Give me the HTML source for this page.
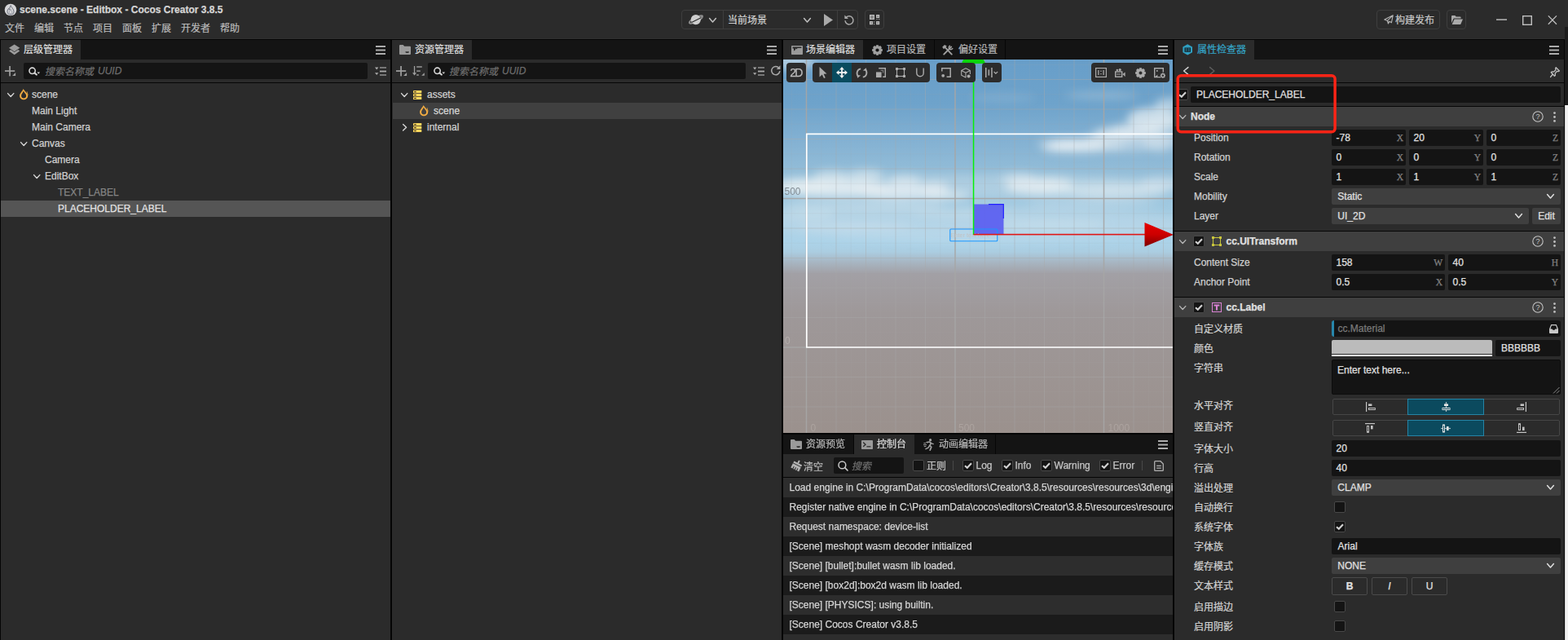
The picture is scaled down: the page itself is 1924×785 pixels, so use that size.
<!DOCTYPE html>
<html><head><meta charset="utf-8"><title>scene.scene - Editbox - Cocos Creator 3.8.5</title>
<style>
html,body{margin:0;padding:0;}
body{width:1924px;height:785px;overflow:hidden;background:#050505;position:relative;font-family:"Liberation Sans",sans-serif;font-size:12px;color:#ccc;}
div{position:absolute;box-sizing:border-box;}
.t{white-space:pre;-webkit-text-stroke:0.25px;}
svg{display:block;overflow:visible;}
.mono{font-family:"Liberation Mono",monospace;}
.cj text{font-family:"Liberation Sans","Noto Sans CJK SC",sans-serif;font-size:12px;stroke-width:0.24px;}
</style></head><body>
<div style="left:0px;top:0px;width:1920px;height:48px;background:#2b2b2b;"></div>
<div style="left:0px;top:47px;width:1920px;height:1px;background:#303030;"></div>
<div style="left:5px;top:4px;line-height:0"><svg width="16" height="16" viewBox="0 0 16 16"><circle cx="8" cy="8" r="7.3" fill="#d6d6d8"/><path fill="none" stroke="#6a6f7c" stroke-width="1" d="M8.2 2.6 C8.8 5.2 12 7 12 10.2 C12 12.6 10.2 14 8 14 C5.8 14 4 12.6 4 10.2 C4 8.4 5 7.2 5.6 6.4 C5.8 7.4 6.2 7.8 6.6 8 C6.6 5.8 7.4 4 8.2 2.6 Z"/><path fill="none" stroke="#8d919c" stroke-width="0.8" d="M8 7.2 C7.6 8.8 6.2 9.8 6.2 11.2 C6.2 12.3 7 13 8 13 C9 13 9.8 12.3 9.8 11.2 C9.8 9.8 8.4 8.8 8 7.2Z"/></svg></div>
<div class="t" style="left:24px;top:2px;height:20px;line-height:20px;font-size:12px;color:#d4d4d4;font-weight:bold;">scene.scene - Editbox - Cocos Creator 3.8.5</div>
<div style="left:6px;top:28px;height:12px;line-height:0"><svg class="cj" width="24.00" height="12.00" viewBox="0 0 24 12" style=""><text x="0" y="10.56" fill="#b8b8b8" stroke="#b8b8b8">文件</text></svg></div>
<div style="left:42px;top:28px;height:12px;line-height:0"><svg class="cj" width="24.00" height="12.00" viewBox="0 0 24 12" style=""><text x="0" y="10.56" fill="#b8b8b8" stroke="#b8b8b8">编辑</text></svg></div>
<div style="left:78px;top:28px;height:12px;line-height:0"><svg class="cj" width="24.00" height="12.00" viewBox="0 0 24 12" style=""><text x="0" y="10.56" fill="#b8b8b8" stroke="#b8b8b8">节点</text></svg></div>
<div style="left:114px;top:28px;height:12px;line-height:0"><svg class="cj" width="24.00" height="12.00" viewBox="0 0 24 12" style=""><text x="0" y="10.56" fill="#b8b8b8" stroke="#b8b8b8">项目</text></svg></div>
<div style="left:150px;top:28px;height:12px;line-height:0"><svg class="cj" width="24.00" height="12.00" viewBox="0 0 24 12" style=""><text x="0" y="10.56" fill="#b8b8b8" stroke="#b8b8b8">面板</text></svg></div>
<div style="left:186px;top:28px;height:12px;line-height:0"><svg class="cj" width="24.00" height="12.00" viewBox="0 0 24 12" style=""><text x="0" y="10.56" fill="#b8b8b8" stroke="#b8b8b8">扩展</text></svg></div>
<div style="left:222px;top:28px;height:12px;line-height:0"><svg class="cj" width="36.00" height="12.00" viewBox="0 0 36 12" style=""><text x="0" y="10.56" fill="#b8b8b8" stroke="#b8b8b8">开发者</text></svg></div>
<div style="left:270px;top:28px;height:12px;line-height:0"><svg class="cj" width="24.00" height="12.00" viewBox="0 0 24 12" style=""><text x="0" y="10.56" fill="#b8b8b8" stroke="#b8b8b8">帮助</text></svg></div>
<div style="left:836px;top:12px;width:217px;height:24px;border:1px solid #3e3e3e;border-radius:4px;"></div>
<div style="left:887px;top:13px;width:1px;height:22px;background:#3e3e3e;"></div>
<div style="left:1027px;top:13px;width:1px;height:22px;background:#3e3e3e;"></div>
<div style="left:845px;top:17px;line-height:0"><svg width="18" height="14" viewBox="0 0 18 14"><ellipse cx="9" cy="7" rx="9" ry="2.6" transform="rotate(-27 9 7)" fill="none" stroke="#8c8c8c" stroke-width="1.6"/><circle cx="8.8" cy="7.1" r="6.1" fill="#cecece"/><path d="M3.6 10.6 L14.6 4.9" stroke="#2b2b2b" stroke-width="1.1"/><path d="M1.2 10.2 C0 11.6 1.6 11.8 4 10.9 M14.4 4.4 C17 2.6 17.6 2.2 16.4 2.2 " fill="none" stroke="#8c8c8c" stroke-width="1.6"/></svg></div>
<div style="left:870px;top:21.5px;line-height:0"><svg width="9" height="5.5" viewBox="0 0 9 5.5"><path d="M0.6 0.6 L4.5 4.9 L8.4 0.6" fill="none" stroke="#c0c0c0" stroke-width="1.5" stroke-linecap="round" stroke-linejoin="round"/></svg></div>
<div style="left:893px;top:18px;height:12px;line-height:0"><svg class="cj" width="48.00" height="12.00" viewBox="0 0 48 12" style=""><text x="0" y="10.56" fill="#d0d0d0" stroke="#d0d0d0">当前场景</text></svg></div>
<div style="left:986px;top:21.5px;line-height:0"><svg width="9" height="5.5" viewBox="0 0 9 5.5"><path d="M0.6 0.6 L4.5 4.9 L8.4 0.6" fill="none" stroke="#c0c0c0" stroke-width="1.5" stroke-linecap="round" stroke-linejoin="round"/></svg></div>
<div style="left:1011px;top:17px;line-height:0"><svg width="11" height="15" viewBox="0 0 11 15"><path fill="#aaaaaa" d="M0 0 L11 7.5 L0 15 Z"/></svg></div>
<div style="left:1036px;top:17.5px;line-height:0"><svg width="12" height="13" viewBox="0 0 12 13"><path d="M2.2 3.6 A5 5 0 1 1 1 7.2" fill="none" stroke="#aaaaaa" stroke-width="1.5"/><path fill="#aaaaaa" d="M0.4 0.4 V5 H5 Z"/></svg></div>
<div style="left:1061px;top:12px;width:24px;height:24px;border:1px solid #3e3e3e;border-radius:4px;"></div>
<div style="left:1067px;top:18px;line-height:0"><svg width="13" height="13" viewBox="0 0 13 13"><rect x="0.6" y="0.6" width="4.8" height="4.8" fill="#858585" stroke="#bdbdbd" stroke-width="1.2"/><rect x="8.7" y="0.6" width="2.9" height="2.9" fill="#858585" stroke="#bdbdbd" stroke-width="1.2"/><rect x="0.6" y="8.7" width="2.9" height="2.9" fill="#858585" stroke="#bdbdbd" stroke-width="1.2"/><rect x="8.7" y="8.7" width="2.9" height="2.9" fill="#858585" stroke="#bdbdbd" stroke-width="1.2"/><rect x="8.5" y="5.1" width="1.1" height="1.1" fill="#bdbdbd"/><rect x="11.2" y="5.1" width="1.1" height="1.1" fill="#bdbdbd"/><rect x="5.1" y="8.4" width="1.1" height="1.1" fill="#bdbdbd"/><rect x="5.1" y="11.1" width="1.1" height="1.1" fill="#bdbdbd"/></svg></div>
<div style="left:1689px;top:12px;width:78px;height:24px;border:1px solid #3e3e3e;border-radius:4px;"></div>
<div style="left:1698px;top:18px;line-height:0"><svg width="12" height="12" viewBox="0 0 12 12"><path d="M11.2 0.8 L0.8 6 L4.4 7.4 L5.4 11 L7 8.2 L9.4 9.8 Z M4.4 7.4 L11.2 0.8 M5.4 11 L5.2 7.8" fill="none" stroke="#b4b4b4" stroke-width="1.1" stroke-linejoin="round"/></svg></div>
<div style="left:1712px;top:18px;height:12px;line-height:0"><svg class="cj" width="48.00" height="12.00" viewBox="0 0 48 12" style=""><text x="0" y="10.56" fill="#c4c4c4" stroke="#c4c4c4">构建发布</text></svg></div>
<div style="left:1775px;top:12px;width:24px;height:24px;border:1px solid #3e3e3e;border-radius:4px;"></div>
<div style="left:1780.5px;top:18.5px;line-height:0"><svg width="14" height="11" viewBox="0 0 14 11"><path fill="#aaaaaa" d="M0 1 Q0 0 1 0 H4.4 L5.8 1.6 H10.6 Q11.6 1.6 11.6 2.6 V3.6 H3.4 Q2.6 3.6 2.2 4.4 L0 9.2 Z"/><path fill="#aaaaaa" d="M3.6 4.6 H14 L11.4 10.4 Q11.2 11 10.4 11 H0.6 Z"/></svg></div>
<div style="left:1834px;top:16px;line-height:0"><svg width="80" height="18" viewBox="0 0 80 18"><rect x="2" y="7.4" width="13" height="1.4" fill="#c0c0c0"/><rect x="34.7" y="3.7" width="10.6" height="10.6" fill="none" stroke="#c0c0c0" stroke-width="1.4"/><path d="M65.8 3.4 L76 13.8 M76 3.4 L65.8 13.8" stroke="#c0c0c0" stroke-width="1.3"/></svg></div>
<div style="left:1920px;top:0px;width:4px;height:33px;background:#2c2c2c;"></div>
<div style="left:1920px;top:33px;width:4px;height:96px;background:#1c1c1c;"></div>
<div style="left:1920px;top:129px;width:4px;height:656px;background:#f2f2f2;"></div>
<div style="left:1920px;top:129px;width:1px;height:656px;background:#cfcfcf;"></div>
<div style="left:1px;top:49px;width:478px;height:736px;background:#2b2b2b;"></div>
<div style="left:1px;top:49px;width:478px;height:24px;background:#141414;"></div>
<div style="left:1px;top:49px;width:98px;height:24px;background:#2b2b2b;"></div>
<div style="left:10.8px;top:54.2px;line-height:0"><svg width="13.3" height="14.2" viewBox="0 0 14 14"><path fill="#9c9c9c" d="M7 0 L14 4.6 L7 9.2 L0 4.6 Z"/><path fill="#9c9c9c" d="M2.3 7 L7 10.1 L11.7 7 L14 8.6 L7 13.4 L0 8.6 Z" /></svg></div>
<div style="left:29px;top:53.8px;height:12px;line-height:0"><svg class="cj" width="60.00" height="12.00" viewBox="0 0 60 12" style=""><text x="0" y="10.56" fill="#dcdcdc" stroke="#dcdcdc">层级管理器</text></svg></div>
<div style="left:461px;top:56px;line-height:0"><svg width="12" height="11" viewBox="0 0 12 11"><rect x="0" y="0" width="12" height="2" fill="#adadad"/><rect x="0" y="4.5" width="12" height="2" fill="#adadad"/><rect x="0" y="9" width="12" height="2" fill="#adadad"/></svg></div>
<div style="left:6px;top:81px;line-height:0"><svg width="14" height="13" viewBox="0 0 14 13"><rect x="0" y="5.2" width="12.2" height="1.7" fill="#a0a0a0"/><rect x="5.2" y="0" width="1.7" height="12.4" fill="#a0a0a0"/><path fill="#a0a0a0" d="M13.1 8 V12 H9.1 Z"/></svg></div>
<div style="left:29px;top:77px;width:422px;height:20px;background:#141414;border-radius:2px;"></div>
<div style="left:34px;top:82px;line-height:0"><svg width="16" height="13" viewBox="0 0 16 13"><circle cx="5.6" cy="4.8" r="3.65" fill="none" stroke="#d6d6d6" stroke-width="1.6"/><path d="M8.4 7.5 L10.8 9.5" stroke="#d6d6d6" stroke-width="2.2" stroke-linecap="round"/><path fill="#d6d6d6" d="M11.5 6.4 H15.1 L13.3 8.8 Z"/></svg></div>
<div style="left:55.3px;top:81px;line-height:0;white-space:nowrap"><svg class="cj" width="60.00" height="12.00" viewBox="0 0 60 12" style=""><text x="0" y="0" transform="translate(0,10.56) skewX(-12)" fill="#6c6c6c" stroke="#6c6c6c">搜索名称或</text></svg></div>
<div class="t" style="left:120px;top:77px;height:20px;line-height:20px;font-size:12px;color:#6c6c6c;font-style:italic;">UUID</div>
<div style="left:460px;top:82px;line-height:0"><svg width="14" height="11" viewBox="0 0 14 11"><path fill="#aaaaaa" d="M0 0.6 H4.4 L2.2 3.4 Z M0 7.2 H4.4 L2.2 10 Z"/><rect x="6" y="0.4" width="8" height="1.2" fill="#aaaaaa"/><rect x="6" y="4.6" width="8" height="1.8" fill="#aaaaaa"/><rect x="6" y="9.4" width="8" height="1.2" fill="#aaaaaa"/></svg></div>
<div style="left:1px;top:101px;width:478px;height:1px;background:#060606;"></div>
<div style="left:8.7px;top:114px;line-height:0"><svg width="8.4" height="5.2" viewBox="0 0 8.4 5.2"><path d="M0.6 0.6 L4.2 4.6000000000000005 L7.800000000000001 0.6" fill="none" stroke="#d8d8d8" stroke-width="1.4" stroke-linecap="round" stroke-linejoin="round"/></svg></div>
<div style="left:23.5px;top:108.8px;line-height:0"><svg width="11" height="13.5" viewBox="0 0 11 13.5"><path fill="#f3ad42" fill-rule="evenodd" d="M4.7 0 C5.8 2.8 10.2 5.4 10.2 8.5 C10.2 11.5 7.7 13.3 5.1 13.3 C2.5 13.3 0.1 11.5 0.1 8.5 C0.1 5.4 3.6 2.8 4.7 0 Z M4.9 2.6 C5.5 4.8 8.2 6.2 8.2 8.6 C8.2 10.4 6.8 11.5 5.1 11.5 C3.4 11.5 2.1 10.4 2.1 8.6 C2.1 6.2 4.4 4.8 4.9 2.6 Z"/><path fill="#f3ad42" d="M8.6 3.4 L9.5 3.2 C9.3 4.8 10.6 6 10.7 8 L9.4 6.4 Z"/></svg></div>
<div class="t" style="left:39px;top:106px;height:20px;line-height:20px;font-size:12px;color:#d0d0d0;">scene</div>
<div class="t" style="left:39px;top:126px;height:20px;line-height:20px;font-size:12px;color:#d0d0d0;">Main Light</div>
<div class="t" style="left:39px;top:146px;height:20px;line-height:20px;font-size:12px;color:#d0d0d0;">Main Camera</div>
<div style="left:24.7px;top:174px;line-height:0"><svg width="8.4" height="5.2" viewBox="0 0 8.4 5.2"><path d="M0.6 0.6 L4.2 4.6000000000000005 L7.800000000000001 0.6" fill="none" stroke="#d8d8d8" stroke-width="1.4" stroke-linecap="round" stroke-linejoin="round"/></svg></div>
<div class="t" style="left:39px;top:166px;height:20px;line-height:20px;font-size:12px;color:#d0d0d0;">Canvas</div>
<div class="t" style="left:55px;top:186px;height:20px;line-height:20px;font-size:12px;color:#d0d0d0;">Camera</div>
<div style="left:40.7px;top:214px;line-height:0"><svg width="8.4" height="5.2" viewBox="0 0 8.4 5.2"><path d="M0.6 0.6 L4.2 4.6000000000000005 L7.800000000000001 0.6" fill="none" stroke="#d8d8d8" stroke-width="1.4" stroke-linecap="round" stroke-linejoin="round"/></svg></div>
<div class="t" style="left:55px;top:206px;height:20px;line-height:20px;font-size:12px;color:#d0d0d0;">EditBox</div>
<div class="t" style="left:71px;top:226px;height:20px;line-height:20px;font-size:12px;color:#858585;">TEXT_LABEL</div>
<div style="left:1px;top:246px;width:478px;height:20px;background:#555555;"></div>
<div class="t" style="left:71px;top:246px;height:20px;line-height:20px;font-size:12px;color:#e2e2e2;">PLACEHOLDER_LABEL</div>
<div style="left:481px;top:49px;width:478px;height:736px;background:#2b2b2b;"></div>
<div style="left:481px;top:49px;width:478px;height:24px;background:#141414;"></div>
<div style="left:481px;top:49px;width:98px;height:24px;background:#2b2b2b;"></div>
<div style="left:490px;top:55px;line-height:0"><svg width="14" height="12" viewBox="0 0 14 12"><path fill="#9a9a9a" d="M0 1 Q0 0 1 0 H4.6 L6.2 1.8 H13 Q14 1.8 14 2.8 V11 Q14 12 13 12 H1 Q0 12 0 11 Z"/><path fill="#2b2b2b" d="M7.3 8.2 H12 A2.35 1.9 0 0 1 7.3 8.2Z"/></svg></div>
<div style="left:509px;top:53.8px;height:12px;line-height:0"><svg class="cj" width="60.00" height="12.00" viewBox="0 0 60 12" style=""><text x="0" y="10.56" fill="#dcdcdc" stroke="#dcdcdc">资源管理器</text></svg></div>
<div style="left:941px;top:56px;line-height:0"><svg width="12" height="11" viewBox="0 0 12 11"><rect x="0" y="0" width="12" height="2" fill="#adadad"/><rect x="0" y="4.5" width="12" height="2" fill="#adadad"/><rect x="0" y="9" width="12" height="2" fill="#adadad"/></svg></div>
<div style="left:486px;top:81px;line-height:0"><svg width="14" height="13" viewBox="0 0 14 13"><rect x="0" y="5.2" width="12.2" height="1.7" fill="#a0a0a0"/><rect x="5.2" y="0" width="1.7" height="12.4" fill="#a0a0a0"/><path fill="#a0a0a0" d="M13.1 8 V12 H9.1 Z"/></svg></div>
<div style="left:506px;top:81.3px;line-height:0"><svg width="15" height="12" viewBox="0 0 15 12"><rect x="1.9" y="0" width="1.3" height="10.5" fill="#a0a0a0"/><path fill="#a0a0a0" d="M0 8.2 H5.1 L2.55 11.6 Z"/><rect x="5.2" y="0.3" width="6.6" height="1.4" fill="#a0a0a0"/><rect x="5.2" y="5.4" width="4.6" height="1.4" fill="#a0a0a0"/><rect x="5.2" y="10.3" width="2.6" height="1.4" fill="#a0a0a0"/><path fill="#a0a0a0" d="M14.8 8.2 V11.8 H11.2 Z"/></svg></div>
<div style="left:525px;top:77px;width:390px;height:20px;background:#141414;border-radius:2px;"></div>
<div style="left:530.5px;top:82px;line-height:0"><svg width="16" height="13" viewBox="0 0 16 13"><circle cx="5.6" cy="4.8" r="3.65" fill="none" stroke="#d6d6d6" stroke-width="1.6"/><path d="M8.4 7.5 L10.8 9.5" stroke="#d6d6d6" stroke-width="2.2" stroke-linecap="round"/><path fill="#d6d6d6" d="M11.5 6.4 H15.1 L13.3 8.8 Z"/></svg></div>
<div style="left:551.3px;top:81px;line-height:0;white-space:nowrap"><svg class="cj" width="60.00" height="12.00" viewBox="0 0 60 12" style=""><text x="0" y="0" transform="translate(0,10.56) skewX(-12)" fill="#6c6c6c" stroke="#6c6c6c">搜索名称或</text></svg></div>
<div class="t" style="left:616px;top:77px;height:20px;line-height:20px;font-size:12px;color:#6c6c6c;font-style:italic;">UUID</div>
<div style="left:924px;top:82px;line-height:0"><svg width="14" height="11" viewBox="0 0 14 11"><path fill="#aaaaaa" d="M0 0.6 H4.4 L2.2 3.4 Z M0 7.2 H4.4 L2.2 10 Z"/><rect x="6" y="0.4" width="8" height="1.2" fill="#aaaaaa"/><rect x="6" y="4.6" width="8" height="1.8" fill="#aaaaaa"/><rect x="6" y="9.4" width="8" height="1.2" fill="#aaaaaa"/></svg></div>
<div style="left:944.5px;top:80.3px;line-height:0"><svg width="13" height="13" viewBox="0 0 13 13"><path d="M10.8 3.4 A5.1 5.1 0 1 0 11.9 7.2" fill="none" stroke="#a8a8a8" stroke-width="1.5"/><path fill="#a8a8a8" d="M12.4 0.2 V4.9 H7.7 Z"/></svg></div>
<div style="left:481px;top:101px;width:478px;height:1px;background:#060606;"></div>
<div style="left:491.7px;top:114px;line-height:0"><svg width="8.4" height="5.2" viewBox="0 0 8.4 5.2"><path d="M0.6 0.6 L4.2 4.6000000000000005 L7.800000000000001 0.6" fill="none" stroke="#d8d8d8" stroke-width="1.4" stroke-linecap="round" stroke-linejoin="round"/></svg></div>
<div style="left:506.8px;top:110.6px;line-height:0"><svg width="10.3" height="11.4" viewBox="0 0 11 12"><rect x="0" y="0" width="11" height="3.4" rx="0.5" fill="#ffd75e"/><rect x="1.2" y="1.1" width="2.8" height="1.2" fill="#2f2a18"/><rect x="0" y="4.2" width="11" height="3.4" rx="0.5" fill="#ffd75e"/><rect x="1.2" y="5.300000000000001" width="2.8" height="1.2" fill="#2f2a18"/><rect x="0" y="8.4" width="11" height="3.4" rx="0.5" fill="#ffd75e"/><rect x="1.2" y="9.5" width="2.8" height="1.2" fill="#2f2a18"/></svg></div>
<div class="t" style="left:524px;top:106px;height:20px;line-height:20px;font-size:12px;color:#d0d0d0;">assets</div>
<div style="left:482px;top:126px;width:477px;height:20px;background:#404040;"></div>
<div style="left:514.6px;top:128.8px;line-height:0"><svg width="11" height="13.5" viewBox="0 0 11 13.5"><path fill="#f3ad42" fill-rule="evenodd" d="M4.7 0 C5.8 2.8 10.2 5.4 10.2 8.5 C10.2 11.5 7.7 13.3 5.1 13.3 C2.5 13.3 0.1 11.5 0.1 8.5 C0.1 5.4 3.6 2.8 4.7 0 Z M4.9 2.6 C5.5 4.8 8.2 6.2 8.2 8.6 C8.2 10.4 6.8 11.5 5.1 11.5 C3.4 11.5 2.1 10.4 2.1 8.6 C2.1 6.2 4.4 4.8 4.9 2.6 Z"/><path fill="#f3ad42" d="M8.6 3.4 L9.5 3.2 C9.3 4.8 10.6 6 10.7 8 L9.4 6.4 Z"/></svg></div>
<div class="t" style="left:532.1px;top:126px;height:20px;line-height:20px;font-size:12px;color:#d8d8d8;">scene</div>
<div style="left:493.7px;top:151.6px;line-height:0"><svg width="5.2" height="8.6" viewBox="0 0 5.2 8.6"><path d="M0.6 0.6 L4.6000000000000005 4.3 L0.6 8.0" fill="none" stroke="#d8d8d8" stroke-width="1.4" stroke-linecap="round" stroke-linejoin="round"/></svg></div>
<div style="left:506.8px;top:150.6px;line-height:0"><svg width="10.3" height="11.4" viewBox="0 0 11 12"><rect x="0" y="0" width="11" height="3.4" rx="0.5" fill="#ffd75e"/><rect x="1.2" y="1.1" width="2.8" height="1.2" fill="#2f2a18"/><rect x="0" y="4.2" width="11" height="3.4" rx="0.5" fill="#ffd75e"/><rect x="1.2" y="5.300000000000001" width="2.8" height="1.2" fill="#2f2a18"/><rect x="0" y="8.4" width="11" height="3.4" rx="0.5" fill="#ffd75e"/><rect x="1.2" y="9.5" width="2.8" height="1.2" fill="#2f2a18"/></svg></div>
<div class="t" style="left:524px;top:146px;height:20px;line-height:20px;font-size:12px;color:#d0d0d0;">internal</div>
<div style="left:961px;top:49px;width:478px;height:24px;background:#141414;"></div>
<div style="left:961px;top:49px;width:98px;height:24px;background:#2b2b2b;"></div>
<div style="left:970.5px;top:56px;line-height:0"><svg width="14" height="11" viewBox="0 0 14 11"><rect x="0" y="0" width="14" height="11" rx="0.8" fill="#9a9a9a"/><path fill="#2b2b2b" d="M1.6 1.6 H12.4 V3 H7.6 L6.3 4.6 L5.6 3.2 L4.6 5.4 L3 6.6 V3.6 L1.6 3.6 Z"/></svg></div>
<div style="left:989px;top:53.8px;height:12px;line-height:0"><svg class="cj" width="60.00" height="12.00" viewBox="0 0 60 12" style=""><text x="0" y="10.56" fill="#dcdcdc" stroke="#dcdcdc">场景编辑器</text></svg></div>
<div style="left:1145.5px;top:49px;width:1px;height:24px;background:#070707;"></div>
<div style="left:1070px;top:54.8px;line-height:0"><svg width="13" height="13" viewBox="0 0 13 13"><path fill="#a0a0a0" d="M12.86 5.15 L12.86 7.85 L11.01 8.41 L11.04 8.34 L11.95 10.04 L10.04 11.95 L8.34 11.04 L8.41 11.01 L7.85 12.86 L5.15 12.86 L4.59 11.01 L4.66 11.04 L2.96 11.95 L1.05 10.04 L1.96 8.34 L1.99 8.41 L0.14 7.85 L0.14 5.15 L1.99 4.59 L1.96 4.66 L1.05 2.96 L2.96 1.05 L4.66 1.96 L4.59 1.99 L5.15 0.14 L7.85 0.14 L8.41 1.99 L8.34 1.96 L10.04 1.05 L11.95 2.96 L11.04 4.66 L11.01 4.59Z"/><circle cx="6.5" cy="6.5" r="2.1" fill="#141414"/></svg></div>
<div style="left:1088.3px;top:53.8px;height:12px;line-height:0"><svg class="cj" width="48.00" height="12.00" viewBox="0 0 48 12" style=""><text x="0" y="10.56" fill="#b4b4b4" stroke="#b4b4b4">项目设置</text></svg></div>
<div style="left:1232.5px;top:49px;width:1px;height:24px;background:#070707;"></div>
<div style="left:1156px;top:55px;line-height:0"><svg width="14" height="13" viewBox="0 0 14 13"><path d="M2.2 11.6 L11.2 2.4" stroke="#a0a0a0" stroke-width="1.9" stroke-linecap="round"/><path d="M3.2 2.6 L11.8 11.6" stroke="#a0a0a0" stroke-width="1.9" stroke-linecap="round"/><path fill="#a0a0a0" d="M0.2 2.8 L3 0 L5.8 1.6 L2 5.2 Z"/><path fill="none" stroke="#a0a0a0" stroke-width="1.6" d="M9.8 1 A2.4 2.4 0 1 0 13 4"/></svg></div>
<div style="left:1175.6px;top:53.8px;height:12px;line-height:0"><svg class="cj" width="48.00" height="12.00" viewBox="0 0 48 12" style=""><text x="0" y="10.56" fill="#b4b4b4" stroke="#b4b4b4">偏好设置</text></svg></div>
<div style="left:1421px;top:56px;line-height:0"><svg width="12" height="11" viewBox="0 0 12 11"><rect x="0" y="0" width="12" height="2" fill="#adadad"/><rect x="0" y="4.5" width="12" height="2" fill="#adadad"/><rect x="0" y="9" width="12" height="2" fill="#adadad"/></svg></div>
<div style="left:961px;top:73px;width:478px;height:458px;background:#7aa;overflow:hidden;"><svg width="478" height="458" viewBox="0 0 478 458"><defs><linearGradient id="sky" x1="0" y1="0" x2="0" y2="1"><stop offset="0" stop-color="#689ec9"/><stop offset="0.12" stop-color="#6ea3cb"/><stop offset="0.21" stop-color="#82b0d2"/><stop offset="0.30" stop-color="#93bdd8"/><stop offset="0.41" stop-color="#a3cbe2"/><stop offset="0.49" stop-color="#acd3e9"/><stop offset="0.515" stop-color="#abcde1"/><stop offset="0.545" stop-color="#a7b4c0"/><stop offset="0.575" stop-color="#a2a0a5"/><stop offset="0.68" stop-color="#9e9899"/><stop offset="1" stop-color="#9b918d"/></linearGradient><filter id="bl" x="-30%" y="-60%" width="160%" height="220%"><feGaussianBlur stdDeviation="5.5"/></filter><filter id="bl2" x="-30%" y="-60%" width="160%" height="220%"><feGaussianBlur stdDeviation="4"/></filter><linearGradient id="arr" x1="0" y1="0" x2="0" y2="1"><stop offset="0" stop-color="#e60000"/><stop offset="0.5" stop-color="#cc0000"/><stop offset="1" stop-color="#7c0000"/></linearGradient></defs><rect width="478" height="458" fill="url(#sky)"/><g filter="url(#bl)"><ellipse cx="64" cy="158" rx="70" ry="10" fill="#e6eef2" opacity="0.85"/><ellipse cx="144" cy="162" rx="60" ry="9" fill="#e6eef2" opacity="0.8"/><ellipse cx="24" cy="155" rx="35" ry="10" fill="#e6eef2" opacity="0.7"/><ellipse cx="199" cy="167" rx="30" ry="6" fill="#e6eef2" opacity="0.6"/><ellipse cx="59" cy="143" rx="22" ry="7" fill="#e6eef2" opacity="0.6"/><ellipse cx="101" cy="142" rx="22" ry="7" fill="#e6eef2" opacity="0.6"/><ellipse cx="149" cy="148" rx="20" ry="7" fill="#e6eef2" opacity="0.55"/><ellipse cx="187" cy="155" rx="16" ry="6" fill="#e6eef2" opacity="0.5"/><ellipse cx="99" cy="179" rx="100" ry="7" fill="#e6eef2" opacity="0.35"/><ellipse cx="24" cy="189" rx="40" ry="7" fill="#e6eef2" opacity="0.3"/><ellipse cx="314" cy="157" rx="42" ry="9" fill="#e6eef2" opacity="0.7"/><ellipse cx="289" cy="146" rx="22" ry="7" fill="#e6eef2" opacity="0.5"/><ellipse cx="334" cy="149" rx="20" ry="6" fill="#e6eef2" opacity="0.45"/><ellipse cx="409" cy="163" rx="60" ry="8" fill="#e6eef2" opacity="0.4"/><ellipse cx="464" cy="151" rx="25" ry="8" fill="#e6eef2" opacity="0.4"/><ellipse cx="379" cy="177" rx="80" ry="6" fill="#e6eef2" opacity="0.25"/><ellipse cx="361" cy="105" rx="36" ry="8" fill="#e6eef2" opacity="0.8"/><ellipse cx="339" cy="109" rx="22" ry="5" fill="#e6eef2" opacity="0.5"/><ellipse cx="411" cy="91" rx="30" ry="9" fill="#e6eef2" opacity="0.6"/><ellipse cx="454" cy="73" rx="32" ry="14" fill="#e6eef2" opacity="0.75"/><ellipse cx="474" cy="55" rx="18" ry="8" fill="#e6eef2" opacity="0.55"/><ellipse cx="434" cy="85" rx="30" ry="8" fill="#e6eef2" opacity="0.5"/><ellipse cx="391" cy="44" rx="45" ry="4" fill="#e6eef2" opacity="0.3"/><ellipse cx="11" cy="3" rx="28" ry="9" fill="#e6eef2" opacity="0.6"/><ellipse cx="47" cy="0" rx="20" ry="4" fill="#e6eef2" opacity="0.3"/><ellipse cx="424" cy="99" rx="55" ry="14" fill="#e6eef2" opacity="0.45"/><ellipse cx="369" cy="107" rx="50" ry="7" fill="#e6eef2" opacity="0.5"/><ellipse cx="464" cy="92" rx="25" ry="22" fill="#e6eef2" opacity="0.4"/><ellipse cx="339" cy="103" rx="28" ry="6" fill="#e6eef2" opacity="0.4"/><ellipse cx="239" cy="155" rx="260" ry="14" fill="#e6eef2" opacity="0.28"/><ellipse cx="389" cy="159" rx="90" ry="10" fill="#e6eef2" opacity="0.3"/><ellipse cx="306" cy="153" rx="30" ry="10" fill="#e6eef2" opacity="0.35"/><ellipse cx="239" cy="202" rx="260" ry="22" fill="#e6eef2" opacity="0.22"/><ellipse cx="269" cy="47" rx="40" ry="5" fill="#e6eef2" opacity="0.15"/><ellipse cx="329" cy="202" rx="70" ry="6" fill="#e6eef2" opacity="0.25"/><ellipse cx="89" cy="205" rx="70" ry="6" fill="#e6eef2" opacity="0.22"/><ellipse cx="219" cy="189" rx="60" ry="5" fill="#e6eef2" opacity="0.2"/></g><rect x="9.75" y="0" width="1" height="458" fill="#aaaaaa" opacity="0.13"/><rect x="27.75" y="0" width="1.5" height="458" fill="#a6a6a6" opacity="0.92"/><rect x="46.25" y="0" width="1" height="458" fill="#aaaaaa" opacity="0.13"/><rect x="64.50" y="0" width="1" height="458" fill="#aaaaaa" opacity="0.42"/><rect x="82.75" y="0" width="1" height="458" fill="#aaaaaa" opacity="0.13"/><rect x="101.00" y="0" width="1" height="458" fill="#aaaaaa" opacity="0.42"/><rect x="119.25" y="0" width="1" height="458" fill="#aaaaaa" opacity="0.13"/><rect x="137.50" y="0" width="1" height="458" fill="#aaaaaa" opacity="0.42"/><rect x="155.75" y="0" width="1" height="458" fill="#aaaaaa" opacity="0.13"/><rect x="174.00" y="0" width="1" height="458" fill="#aaaaaa" opacity="0.42"/><rect x="192.25" y="0" width="1" height="458" fill="#aaaaaa" opacity="0.13"/><rect x="210.25" y="0" width="1.5" height="458" fill="#a6a6a6" opacity="0.92"/><rect x="228.75" y="0" width="1" height="458" fill="#aaaaaa" opacity="0.13"/><rect x="247.00" y="0" width="1" height="458" fill="#aaaaaa" opacity="0.42"/><rect x="265.25" y="0" width="1" height="458" fill="#aaaaaa" opacity="0.13"/><rect x="283.50" y="0" width="1" height="458" fill="#aaaaaa" opacity="0.42"/><rect x="301.75" y="0" width="1" height="458" fill="#aaaaaa" opacity="0.13"/><rect x="320.00" y="0" width="1" height="458" fill="#aaaaaa" opacity="0.42"/><rect x="338.25" y="0" width="1" height="458" fill="#aaaaaa" opacity="0.13"/><rect x="356.50" y="0" width="1" height="458" fill="#aaaaaa" opacity="0.42"/><rect x="374.75" y="0" width="1" height="458" fill="#aaaaaa" opacity="0.13"/><rect x="392.75" y="0" width="1.5" height="458" fill="#a6a6a6" opacity="0.92"/><rect x="411.25" y="0" width="1" height="458" fill="#aaaaaa" opacity="0.13"/><rect x="429.50" y="0" width="1" height="458" fill="#aaaaaa" opacity="0.42"/><rect x="447.75" y="0" width="1" height="458" fill="#aaaaaa" opacity="0.13"/><rect x="466.00" y="0" width="1" height="458" fill="#aaaaaa" opacity="0.42"/><rect x="0" y="443.75" width="478" height="1" fill="#aaaaaa" opacity="0.13"/><rect x="0" y="425.50" width="478" height="1" fill="#aaaaaa" opacity="0.42"/><rect x="0" y="407.25" width="478" height="1" fill="#aaaaaa" opacity="0.13"/><rect x="0" y="389.00" width="478" height="1" fill="#aaaaaa" opacity="0.42"/><rect x="0" y="370.75" width="478" height="1" fill="#aaaaaa" opacity="0.13"/><rect x="0" y="352.25" width="478" height="1.5" fill="#a6a6a6" opacity="0.92"/><rect x="0" y="334.25" width="478" height="1" fill="#aaaaaa" opacity="0.13"/><rect x="0" y="316.00" width="478" height="1" fill="#aaaaaa" opacity="0.42"/><rect x="0" y="297.75" width="478" height="1" fill="#aaaaaa" opacity="0.13"/><rect x="0" y="279.50" width="478" height="1" fill="#aaaaaa" opacity="0.42"/><rect x="0" y="261.25" width="478" height="1" fill="#aaaaaa" opacity="0.13"/><rect x="0" y="243.00" width="478" height="1" fill="#aaaaaa" opacity="0.42"/><rect x="0" y="224.75" width="478" height="1" fill="#aaaaaa" opacity="0.13"/><rect x="0" y="206.50" width="478" height="1" fill="#aaaaaa" opacity="0.42"/><rect x="0" y="188.25" width="478" height="1" fill="#aaaaaa" opacity="0.13"/><rect x="0" y="169.75" width="478" height="1.5" fill="#a6a6a6" opacity="0.92"/><rect x="0" y="151.75" width="478" height="1" fill="#aaaaaa" opacity="0.13"/><rect x="0" y="133.50" width="478" height="1" fill="#aaaaaa" opacity="0.42"/><rect x="0" y="115.25" width="478" height="1" fill="#aaaaaa" opacity="0.13"/><rect x="0" y="97.00" width="478" height="1" fill="#aaaaaa" opacity="0.42"/><rect x="0" y="78.75" width="478" height="1" fill="#aaaaaa" opacity="0.13"/><rect x="0" y="60.50" width="478" height="1" fill="#aaaaaa" opacity="0.42"/><rect x="0" y="42.25" width="478" height="1" fill="#aaaaaa" opacity="0.13"/><rect x="0" y="24.00" width="478" height="1" fill="#aaaaaa" opacity="0.42"/><rect x="0" y="5.75" width="478" height="1" fill="#aaaaaa" opacity="0.13"/><text x="1.5" y="165.7" font-family="Liberation Sans" font-size="12" fill="#7f8890" opacity="0.95">500</text><text x="2" y="348.5" font-family="Liberation Sans" font-size="12" fill="#b4adab">0</text><text x="33.5" y="455.5" font-family="Liberation Sans" font-size="12" fill="#aca39f">0</text><text x="215" y="455.5" font-family="Liberation Sans" font-size="12" fill="#aca39f">500</text><text x="398.5" y="455.5" font-family="Liberation Sans" font-size="12" fill="#aca39f">1000</text><path d="M482 91.30000000000001 H28.799999999999955 V353 H482" fill="none" stroke="#ffffff" stroke-width="1.7"/><rect x="233.5" y="177.5" width="37" height="37" fill="#5a5ff0" opacity="0.93"/><path d="M252 177.6 H270.29999999999995 V195" fill="none" stroke="#2222ff" stroke-width="1.2"/><rect x="204.79999999999995" y="208" width="58" height="14.8" fill="none" stroke="#1a96ff" stroke-width="1.1" rx="1"/><text x="205.5999999999999" y="217.60000000000002" font-family="Liberation Sans" font-size="7.3" fill="#c2c2c2" opacity="0.95">Enter text here...</text><rect x="232.79999999999995" y="0" width="1.5" height="215" fill="#06f006"/><path d="M219 5 Q219.5 0 225 -2 H242 Q247.5 0 248 5 Z" fill="#0cd40c"/><rect x="233.5" y="213.8" width="211.5" height="1.6" fill="#e01616"/><path d="M443.5 200 L479 214.8 L443.5 229.60000000000002 Z" fill="url(#arr)"/></svg></div>
<div style="left:965px;top:77px;width:24px;height:24px;background:#2c2c2c;border-radius:4px;"></div>
<div class="t" style="left:965px;top:77px;height:24px;line-height:24px;font-size:14px;color:#bcbcbc;width:24px;overflow:hidden;text-align:center;letter-spacing:-1.8px;text-indent:-1.2px;">2D</div>
<div style="left:997px;top:77px;width:144px;height:24px;background:#2c2c2c;border-radius:4px;"></div>
<div style="left:1021px;top:77px;width:24px;height:24px;background:#094b5f;"></div>
<div style="left:1005px;top:81.5px;line-height:0"><svg width="10" height="14" viewBox="0 0 10 14"><path fill="#aaaaaa" d="M0.5 0 L9.5 8.6 L5.6 8.8 L7.8 13.2 L6 14 L3.8 9.6 L0.5 12.4 Z"/></svg></div>
<div style="left:1026.0px;top:82.0px;line-height:0"><svg width="14" height="14" viewBox="0 0 14 14"><path fill="#f0f0f0" d="M7 0 L10 3.4 H7.9 V6.1 H10.6 V4 L14 7 L10.6 10 V7.9 H7.9 V10.6 H10 L7 14 L4 10.6 H6.1 V7.9 H3.4 V10 L0 7 L3.4 4 V6.1 H6.1 V3.4 H4 Z"/></svg></div>
<div style="left:1050.5px;top:82.5px;line-height:0"><svg width="13" height="13" viewBox="0 0 13 13"><path d="M5.2 1.4 A5.4 5.4 0 0 0 2.2 10.6" fill="none" stroke="#aaaaaa" stroke-width="1.8"/><path fill="#aaaaaa" d="M0.4 9 L5.2 9.6 L1.2 12.8 Z"/><path d="M7.8 11.6 A5.4 5.4 0 0 0 10.8 2.4" fill="none" stroke="#aaaaaa" stroke-width="1.8"/><path fill="#aaaaaa" d="M12.6 4 L7.8 3.4 L11.8 0.2 Z"/></svg></div>
<div style="left:1075.0px;top:83.0px;line-height:0"><svg width="12" height="12" viewBox="0 0 12 12"><rect x="0" y="5.4" width="6.6" height="6.6" fill="#aaaaaa"/><path d="M3.2 0.7 H11.3 V8.8 M8.2 11.3 H11.3 V8" fill="none" stroke="#aaaaaa" stroke-width="1.4"/><path d="M5.6 3.4 H8.6 V6.4" fill="none" stroke="#777" stroke-width="1.3"/></svg></div>
<div style="left:1099.0px;top:83.0px;line-height:0"><svg width="12" height="12" viewBox="0 0 12 12"><rect x="1.5" y="1.5" width="9" height="9" fill="none" stroke="#aaaaaa" stroke-width="1.1"/><rect x="0" y="0" width="3" height="3" fill="#aaaaaa"/><rect x="9" y="0" width="3" height="3" fill="#aaaaaa"/><rect x="0" y="9" width="3" height="3" fill="#aaaaaa"/><rect x="9" y="9" width="3" height="3" fill="#aaaaaa"/></svg></div>
<div style="left:1124.0px;top:83.0px;line-height:0"><svg width="10" height="12" viewBox="0 0 10 12"><path d="M0.8 0.4 V6.6 A4.2 4.2 0 0 0 9.2 6.6 V0.4" fill="none" stroke="#aaaaaa" stroke-width="1.4"/></svg></div>
<div style="left:1149px;top:77px;width:48px;height:24px;background:#2c2c2c;border-radius:4px;"></div>
<div style="left:1155.0px;top:83.0px;line-height:0"><svg width="12" height="12" viewBox="0 0 12 12"><path d="M0.8 4.4 V0.8 H11.2 V11.2 H6.6" fill="none" stroke="#aaaaaa" stroke-width="1.5"/><circle cx="2.2" cy="9.8" r="1.9" fill="#aaaaaa"/></svg></div>
<div style="left:1178.5px;top:82.5px;line-height:0"><svg width="13" height="13" viewBox="0 0 13 13"><path d="M6 0.7 L11.4 3.4 V8 M6 0.7 L0.7 3.4 V9.2 L6 12 V6.2 M0.7 3.4 L6 6.2 L11.4 3.4" fill="none" stroke="#aaaaaa" stroke-width="1.1" stroke-linejoin="round"/><circle cx="9.6" cy="10.6" r="2" fill="#aaaaaa"/></svg></div>
<div style="left:1205px;top:77px;width:24px;height:24px;background:#2c2c2c;border-radius:4px;"></div>
<div style="left:1209.0px;top:83.0px;line-height:0"><svg width="16" height="12" viewBox="0 0 16 12"><rect x="0" y="0" width="1.5" height="12" fill="#aaaaaa"/><rect x="3.6" y="2.4" width="1.5" height="7.2" fill="#aaaaaa"/><rect x="7.2" y="0" width="1.5" height="12" fill="#aaaaaa"/><path d="M10.6 5 L12.8 7.2 L15.2 5" fill="none" stroke="#aaaaaa" stroke-width="1.1"/></svg></div>
<div style="left:1339px;top:77px;width:96px;height:24px;background:#2c2c2c;border-radius:4px;"></div>
<div style="left:1344.0px;top:83.0px;line-height:0"><svg width="14" height="12" viewBox="0 0 14 12"><rect x="0.6" y="0.6" width="12.8" height="10.8" fill="none" stroke="#aaaaaa" stroke-width="1.2"/><rect x="3.2" y="3" width="1.3" height="6" fill="#aaaaaa"/><rect x="9.4" y="3" width="1.3" height="6" fill="#aaaaaa"/><rect x="6.3" y="3.6" width="1.3" height="1.3" fill="#aaaaaa"/><rect x="6.3" y="7" width="1.3" height="1.3" fill="#aaaaaa"/></svg></div>
<div style="left:1367.5px;top:83.5px;line-height:0"><svg width="13" height="11" viewBox="0 0 13 11"><rect x="0.7" y="4" width="8" height="6.2" fill="none" stroke="#aaaaaa" stroke-width="1.4"/><rect x="2" y="6.2" width="5.4" height="1.6" fill="#aaaaaa" opacity="0.6"/><path fill="#aaaaaa" d="M9.4 7 L12.6 4.4 V10 Z"/><circle cx="2.8" cy="2" r="1.2" fill="#aaaaaa"/><circle cx="6.2" cy="1.6" r="1.6" fill="#aaaaaa"/></svg></div>
<div style="left:1392.5px;top:82.5px;line-height:0"><svg width="13" height="13" viewBox="0 0 13 13"><path fill="#aaaaaa" d="M12.86 5.15 L12.86 7.85 L11.01 8.41 L11.04 8.34 L11.95 10.04 L10.04 11.95 L8.34 11.04 L8.41 11.01 L7.85 12.86 L5.15 12.86 L4.59 11.01 L4.66 11.04 L2.96 11.95 L1.05 10.04 L1.96 8.34 L1.99 8.41 L0.14 7.85 L0.14 5.15 L1.99 4.59 L1.96 4.66 L1.05 2.96 L2.96 1.05 L4.66 1.96 L4.59 1.99 L5.15 0.14 L7.85 0.14 L8.41 1.99 L8.34 1.96 L10.04 1.05 L11.95 2.96 L11.04 4.66 L11.01 4.59Z"/><circle cx="6.5" cy="6.5" r="2" fill="#2c2c2c"/></svg></div>
<div style="left:1416.0px;top:82.5px;line-height:0"><svg width="14" height="13" viewBox="0 0 14 13"><path d="M8 11.6 H0.7 V0.7 H11.3 V5.4" fill="none" stroke="#aaaaaa" stroke-width="1.4"/><rect x="3" y="3" width="1.6" height="1.8" fill="#aaaaaa"/><path fill="#aaaaaa" d="M1.4 11 L4.4 8.4 V11 Z"/><g transform="translate(7.6,6.4) scale(0.5)"><path fill="#aaaaaa" d="M12.86 5.15 L12.86 7.85 L10.83 8.33 L10.86 8.27 L11.95 10.04 L10.04 11.95 L8.27 10.86 L8.33 10.83 L7.85 12.86 L5.15 12.86 L4.67 10.83 L4.73 10.86 L2.96 11.95 L1.05 10.04 L2.14 8.27 L2.17 8.33 L0.14 7.85 L0.14 5.15 L2.17 4.67 L2.14 4.73 L1.05 2.96 L2.96 1.05 L4.73 2.14 L4.67 2.17 L5.15 0.14 L7.85 0.14 L8.33 2.17 L8.27 2.14 L10.04 1.05 L11.95 2.96 L10.86 4.73 L10.83 4.67Z"/></g><circle cx="10.85" cy="9.65" r="1.2" fill="#2b2b2b"/></svg></div>
<div style="left:961px;top:533px;width:478px;height:252px;background:#2b2b2b;"></div>
<div style="left:961px;top:533px;width:478px;height:24px;background:#141414;"></div>
<div style="left:1046.5px;top:533px;width:1px;height:24px;background:#070707;"></div>
<div style="left:970px;top:539px;line-height:0"><svg width="14" height="12" viewBox="0 0 14 12"><path fill="#9a9a9a" d="M0 1 Q0 0 1 0 H4.6 L6.2 1.8 H13 Q14 1.8 14 2.8 V11 Q14 12 13 12 H1 Q0 12 0 11 Z"/><path fill="#2b2b2b" d="M7.3 8.2 H12 A2.35 1.9 0 0 1 7.3 8.2Z"/></svg></div>
<div style="left:989px;top:537.8px;height:12px;line-height:0"><svg class="cj" width="48.00" height="12.00" viewBox="0 0 48 12" style=""><text x="0" y="10.56" fill="#b4b4b4" stroke="#b4b4b4">资源预览</text></svg></div>
<div style="left:1047.5px;top:533px;width:74.5px;height:24px;background:#2b2b2b;"></div>
<div style="left:1057px;top:539.6px;line-height:0"><svg width="14" height="11" viewBox="0 0 14 11"><rect width="14" height="11" rx="0.8" fill="#9a9a9a"/><path d="M2.2 2.6 L5 5.2 L2.2 7.8" fill="none" stroke="#2b2b2b" stroke-width="1.3"/><rect x="6.4" y="7.2" width="5" height="1.2" fill="#2b2b2b"/></svg></div>
<div style="left:1076px;top:537.8px;height:12px;line-height:0"><svg class="cj" width="36.00" height="12.00" viewBox="0 0 36 12" style=""><text x="0" y="10.56" fill="#dcdcdc" stroke="#dcdcdc">控制台</text></svg></div>
<div style="left:1220.7px;top:533px;width:1px;height:24px;background:#070707;"></div>
<div style="left:1133.3px;top:537.8px;line-height:0"><svg width="13" height="15" viewBox="0 0 13 15"><circle cx="8.6" cy="1.7" r="1.6" fill="#a0a0a0"/><path d="M4.2 4.6 L7.6 4 L9.4 5.4 L8 8.4 L9.8 10.4 L8.2 14.2" fill="none" stroke="#a0a0a0" stroke-width="1.7" stroke-linejoin="round" stroke-linecap="round"/><path d="M7.6 8.6 L6 11.2 L3 12.6" fill="none" stroke="#a0a0a0" stroke-width="1.6" stroke-linecap="round"/><path d="M9.4 5.6 L12.2 6.6" fill="none" stroke="#a0a0a0" stroke-width="1.4" stroke-linecap="round"/><path d="M0.4 5.6 H3 M0 7.6 H4 M0.8 9.6 H3.4" stroke="#a0a0a0" stroke-width="1"/></svg></div>
<div style="left:1151.6px;top:537.8px;height:12px;line-height:0"><svg class="cj" width="60.00" height="12.00" viewBox="0 0 60 12" style=""><text x="0" y="10.56" fill="#b4b4b4" stroke="#b4b4b4">动画编辑器</text></svg></div>
<div style="left:1421px;top:540px;line-height:0"><svg width="12" height="11" viewBox="0 0 12 11"><rect x="0" y="0" width="12" height="2" fill="#adadad"/><rect x="0" y="4.5" width="12" height="2" fill="#adadad"/><rect x="0" y="9" width="12" height="2" fill="#adadad"/></svg></div>
<div style="left:971.3px;top:563.4px;line-height:0"><svg width="14" height="15" viewBox="0 0 14 15"><g transform="rotate(27 7 7.5) translate(0.7,1.2)"><rect x="5.3" y="0" width="2" height="3.6" fill="#b4b4b4"/><rect x="0.8" y="3.4" width="11" height="2.4" fill="#b4b4b4"/><path fill="#b4b4b4" d="M0.8 6.6 H11.8 V12.4 H9.4 V9.4 H8.4 V12.4 H6.8 V9.4 H5.8 V12.4 H4.2 V9.4 H3.2 V12.4 H0.8 Z"/></g></svg></div>
<div style="left:985.6px;top:565.6px;height:12px;line-height:0"><svg class="cj" width="24.00" height="12.00" viewBox="0 0 24 12" style=""><text x="0" y="10.56" fill="#b8b8b8" stroke="#b8b8b8">清空</text></svg></div>
<div style="left:1023px;top:561px;width:86px;height:20px;background:#141414;border-radius:2px;"></div>
<div style="left:1028px;top:565px;line-height:0"><svg width="13" height="13" viewBox="0 0 13 13"><circle cx="5.4" cy="5.4" r="4.4" fill="none" stroke="#c8c8c8" stroke-width="1.5"/><path d="M8.7 8.7 L12 12" stroke="#c8c8c8" stroke-width="1.7" stroke-linecap="round"/></svg></div>
<div style="left:1045.3px;top:565px;line-height:0"><svg class="cj" width="24.00" height="12.00" viewBox="0 0 24 12" style=""><text x="0" y="0" transform="translate(0,10.56) skewX(-12)" fill="#6c6c6c" stroke="#6c6c6c">搜索</text></svg></div>
<div style="left:1120px;top:564px;width:14px;height:14px"><div style="left:0;top:0;width:14px;height:14px;background:#141414;border:1px solid #484848;border-radius:2px;"></div></div>
<div style="left:1137px;top:565.3px;height:12px;line-height:0"><svg class="cj" width="24.00" height="12.00" viewBox="0 0 24 12" style=""><text x="0" y="10.56" fill="#c4c4c4" stroke="#c4c4c4">正则</text></svg></div>
<div style="left:1169px;top:565px;width:1px;height:12px;background:#484848;"></div>
<div style="left:1181px;top:564px;width:14px;height:14px"><div style="left:0;top:0;width:14px;height:14px;background:#141414;border:1px solid #484848;border-radius:2px;"><div style="left:1px;top:2px;line-height:0"><svg width="10" height="8" viewBox="0 0 10 8"><path d="M1 4.2 L3.8 6.8 L9 1.2" fill="none" stroke="#d2d2d2" stroke-width="2.1" stroke-linecap="butt" stroke-linejoin="miter"/></svg></div></div></div>
<div class="t" style="left:1197.5px;top:561px;height:20px;line-height:20px;font-size:12px;color:#c4c4c4;">Log</div>
<div style="left:1229px;top:564px;width:14px;height:14px"><div style="left:0;top:0;width:14px;height:14px;background:#141414;border:1px solid #484848;border-radius:2px;"><div style="left:1px;top:2px;line-height:0"><svg width="10" height="8" viewBox="0 0 10 8"><path d="M1 4.2 L3.8 6.8 L9 1.2" fill="none" stroke="#d2d2d2" stroke-width="2.1" stroke-linecap="butt" stroke-linejoin="miter"/></svg></div></div></div>
<div class="t" style="left:1245.5px;top:561px;height:20px;line-height:20px;font-size:12px;color:#c4c4c4;">Info</div>
<div style="left:1277px;top:564px;width:14px;height:14px"><div style="left:0;top:0;width:14px;height:14px;background:#141414;border:1px solid #484848;border-radius:2px;"><div style="left:1px;top:2px;line-height:0"><svg width="10" height="8" viewBox="0 0 10 8"><path d="M1 4.2 L3.8 6.8 L9 1.2" fill="none" stroke="#d2d2d2" stroke-width="2.1" stroke-linecap="butt" stroke-linejoin="miter"/></svg></div></div></div>
<div class="t" style="left:1293.5px;top:561px;height:20px;line-height:20px;font-size:12px;color:#c4c4c4;">Warning</div>
<div style="left:1349px;top:564px;width:14px;height:14px"><div style="left:0;top:0;width:14px;height:14px;background:#141414;border:1px solid #484848;border-radius:2px;"><div style="left:1px;top:2px;line-height:0"><svg width="10" height="8" viewBox="0 0 10 8"><path d="M1 4.2 L3.8 6.8 L9 1.2" fill="none" stroke="#d2d2d2" stroke-width="2.1" stroke-linecap="butt" stroke-linejoin="miter"/></svg></div></div></div>
<div class="t" style="left:1365.5px;top:561px;height:20px;line-height:20px;font-size:12px;color:#c4c4c4;">Error</div>
<div style="left:1401px;top:565px;width:1px;height:12px;background:#484848;"></div>
<div style="left:1416px;top:565px;line-height:0"><svg width="12" height="13" viewBox="0 0 12 13"><path d="M0.7 1.6 Q0.7 0.7 1.6 0.7 H8 L11.3 4 V11.4 Q11.3 12.3 10.4 12.3 H1.6 Q0.7 12.3 0.7 11.4 Z" fill="none" stroke="#b0b0b0" stroke-width="1.3"/><path d="M3.2 6.4 H8.8 M3.2 9.2 H8.8" stroke="#b0b0b0" stroke-width="1.2"/></svg></div>
<div style="left:961px;top:585px;width:478px;height:1px;background:#060606;"></div>
<div style="left:961px;top:586px;width:478px;height:24px;background:#2d2d2d;overflow:hidden;"><div class="t" style="left:7.5px;top:0px;height:24px;line-height:24px;font-size:12px;color:#d4d4d4;">Load engine in C:\ProgramData\cocos\editors\Creator\3.8.5\resources\resources\3d\engine</div></div>
<div style="left:961px;top:610px;width:478px;height:24px;background:#1b1b1b;overflow:hidden;"><div class="t" style="left:7.5px;top:0px;height:24px;line-height:24px;font-size:12px;color:#d4d4d4;">Register native engine in C:\ProgramData\cocos\editors\Creator\3.8.5\resources\resources\3d\engine-native</div></div>
<div style="left:961px;top:634px;width:478px;height:24px;background:#2d2d2d;overflow:hidden;"><div class="t" style="left:7.5px;top:0px;height:24px;line-height:24px;font-size:12px;color:#d4d4d4;">Request namespace: device-list</div></div>
<div style="left:961px;top:658px;width:478px;height:24px;background:#1b1b1b;overflow:hidden;"><div class="t" style="left:7.5px;top:0px;height:24px;line-height:24px;font-size:12px;color:#d4d4d4;">[Scene] meshopt wasm decoder initialized</div></div>
<div style="left:961px;top:682px;width:478px;height:24px;background:#2d2d2d;overflow:hidden;"><div class="t" style="left:7.5px;top:0px;height:24px;line-height:24px;font-size:12px;color:#d4d4d4;">[Scene] [bullet]:bullet wasm lib loaded.</div></div>
<div style="left:961px;top:706px;width:478px;height:24px;background:#1b1b1b;overflow:hidden;"><div class="t" style="left:7.5px;top:0px;height:24px;line-height:24px;font-size:12px;color:#d4d4d4;">[Scene] [box2d]:box2d wasm lib loaded.</div></div>
<div style="left:961px;top:730px;width:478px;height:24px;background:#2d2d2d;overflow:hidden;"><div class="t" style="left:7.5px;top:0px;height:24px;line-height:24px;font-size:12px;color:#d4d4d4;">[Scene] [PHYSICS]: using builtin.</div></div>
<div style="left:961px;top:754px;width:478px;height:24px;background:#1b1b1b;overflow:hidden;"><div class="t" style="left:7.5px;top:0px;height:24px;line-height:24px;font-size:12px;color:#d4d4d4;">[Scene] Cocos Creator v3.8.5</div></div>
<div style="left:961px;top:778px;width:478px;height:24px;background:#2d2d2d;overflow:hidden;"><div class="t" style="left:7.5px;top:0px;height:24px;line-height:24px;font-size:12px;color:#d4d4d4;"></div></div>
<div style="left:1441px;top:49px;width:478px;height:736px;background:#2b2b2b;"></div>
<div style="left:1441px;top:49px;width:478px;height:24px;background:#141414;"></div>
<div style="left:1441px;top:49px;width:98px;height:24px;background:#2b2b2b;"></div>
<div style="left:1451px;top:54.2px;line-height:0"><svg width="12.4" height="13.8" viewBox="0 0 14 15"><path fill="#2f9fc1" d="M7 0 L13.6 3.6 V11.2 L7 15 L0.4 11.2 V3.6 Z"/><path fill="none" stroke="#141d22" stroke-width="1.2" d="M3.4 5.4 H10.6 V10 H3.4 Z M3.4 7.7 H10.6 M7 5.4 V10"/></svg></div>
<div style="left:1469px;top:53.8px;height:12px;line-height:0"><svg class="cj" width="60.00" height="12.00" viewBox="0 0 60 12" style=""><text x="0" y="10.56" fill="#34a3c6" stroke="#34a3c6">属性检查器</text></svg></div>
<div style="left:1901px;top:56px;line-height:0"><svg width="12" height="11" viewBox="0 0 12 11"><rect x="0" y="0" width="12" height="2" fill="#adadad"/><rect x="0" y="4.5" width="12" height="2" fill="#adadad"/><rect x="0" y="9" width="12" height="2" fill="#adadad"/></svg></div>
<div style="left:1451.5px;top:82px;line-height:0"><svg width="6.5" height="10" viewBox="0 0 6.5 10"><path d="M5.9 0.6 L0.6 5.0 L5.9 9.4" fill="none" stroke="#d0d0d0" stroke-width="1.5" stroke-linecap="round" stroke-linejoin="round"/></svg></div>
<div style="left:1483.5px;top:82px;line-height:0"><svg width="6.5" height="10" viewBox="0 0 6.5 10"><path d="M0.6 0.6 L5.9 5.0 L0.6 9.4" fill="none" stroke="#5c5c5c" stroke-width="1.5" stroke-linecap="round" stroke-linejoin="round"/></svg></div>
<div style="left:1901.5px;top:81.5px;line-height:0"><svg width="12" height="13" viewBox="0 0 12 13"><path fill="none" stroke="#c0c0c0" stroke-width="1.3" stroke-linejoin="round" d="M7.2 0.8 L11.4 5 L10.2 5.6 L8.4 5.4 L6.2 8.2 L6.4 10.4 L5.4 11.2 L1.2 6.8 L2.2 6 L4.4 6.2 L7 3.8 L6.6 1.8 Z"/><path d="M3.4 9 L0.6 12.4" stroke="#c0c0c0" stroke-width="1.4" stroke-linecap="round"/></svg></div>
<div style="left:1441px;top:101px;width:478px;height:1px;background:#060606;"></div>
<div style="left:1444px;top:109px;width:14px;height:14px"><div style="left:0;top:0;width:14px;height:14px;background:#141414;border:1px solid #484848;border-radius:2px;"><div style="left:1px;top:2px;line-height:0"><svg width="10" height="8" viewBox="0 0 10 8"><path d="M1 4.2 L3.8 6.8 L9 1.2" fill="none" stroke="#d2d2d2" stroke-width="2.1" stroke-linecap="butt" stroke-linejoin="miter"/></svg></div></div></div>
<div style="left:1461px;top:106px;width:454px;height:20px;background:#141414;border-radius:2px;"></div>
<div class="t" style="left:1468px;top:106px;height:20px;line-height:20px;font-size:12px;color:#e0e0e0;">PLACEHOLDER_LABEL</div>
<div style="left:1441px;top:130px;width:478px;height:1px;background:#060606;"></div>
<div style="left:1441px;top:131px;width:478px;height:24px;background:#3f3f3f;"></div>
<div style="left:1447px;top:140.8px;line-height:0"><svg width="8.4" height="5.2" viewBox="0 0 8.4 5.2"><path d="M0.6 0.6 L4.2 4.6000000000000005 L7.800000000000001 0.6" fill="none" stroke="#b4b4b4" stroke-width="1.4" stroke-linecap="round" stroke-linejoin="round"/></svg></div>
<div class="t" style="left:1461px;top:133px;height:20px;line-height:20px;font-size:12px;color:#e0e0e0;font-weight:bold;">Node</div>
<div style="left:1880px;top:136px;line-height:0"><svg width="14" height="14" viewBox="0 0 14 14"><circle cx="7" cy="7" r="6.2" fill="none" stroke="#c4c4c4" stroke-width="1.1"/><text x="7" y="10.3" font-family="Liberation Sans" font-size="9" fill="#c4c4c4" text-anchor="middle">?</text></svg></div>
<div style="left:1905.5px;top:136.5px;line-height:0"><svg width="3" height="13" viewBox="0 0 3 13"><circle cx="1.5" cy="1.6" r="1.4" fill="#c0c0c0"/><circle cx="1.5" cy="6.5" r="1.4" fill="#c0c0c0"/><circle cx="1.5" cy="11.4" r="1.4" fill="#c0c0c0"/></svg></div>
<div class="t" style="left:1465px;top:159px;height:20px;line-height:20px;font-size:12px;color:#d0d0d0;">Position</div>
<div style="left:1634px;top:159px;width:91px;height:20px;background:#141414;border-radius:2px;"><div class="t" style="left:5.5px;top:0px;height:20px;line-height:20px;font-size:12px;color:#e0e0e0;">-78</div><div class="t" style="right:3px;top:-0.3px;height:20px;line-height:20px;font-size:11.5px;font-family:'Liberation Serif',serif;color:#808080">X</div></div>
<div style="left:1729px;top:159px;width:91px;height:20px;background:#141414;border-radius:2px;"><div class="t" style="left:5.5px;top:0px;height:20px;line-height:20px;font-size:12px;color:#e0e0e0;">20</div><div class="t" style="right:3px;top:-0.3px;height:20px;line-height:20px;font-size:11.5px;font-family:'Liberation Serif',serif;color:#808080">Y</div></div>
<div style="left:1824px;top:159px;width:91px;height:20px;background:#141414;border-radius:2px;"><div class="t" style="left:5.5px;top:0px;height:20px;line-height:20px;font-size:12px;color:#e0e0e0;">0</div><div class="t" style="right:3px;top:-0.3px;height:20px;line-height:20px;font-size:11.5px;font-family:'Liberation Serif',serif;color:#808080">Z</div></div>
<div class="t" style="left:1465px;top:183px;height:20px;line-height:20px;font-size:12px;color:#d0d0d0;">Rotation</div>
<div style="left:1634px;top:183px;width:91px;height:20px;background:#141414;border-radius:2px;"><div class="t" style="left:5.5px;top:0px;height:20px;line-height:20px;font-size:12px;color:#e0e0e0;">0</div><div class="t" style="right:3px;top:-0.3px;height:20px;line-height:20px;font-size:11.5px;font-family:'Liberation Serif',serif;color:#808080">X</div></div>
<div style="left:1729px;top:183px;width:91px;height:20px;background:#141414;border-radius:2px;"><div class="t" style="left:5.5px;top:0px;height:20px;line-height:20px;font-size:12px;color:#e0e0e0;">0</div><div class="t" style="right:3px;top:-0.3px;height:20px;line-height:20px;font-size:11.5px;font-family:'Liberation Serif',serif;color:#808080">Y</div></div>
<div style="left:1824px;top:183px;width:91px;height:20px;background:#141414;border-radius:2px;"><div class="t" style="left:5.5px;top:0px;height:20px;line-height:20px;font-size:12px;color:#e0e0e0;">0</div><div class="t" style="right:3px;top:-0.3px;height:20px;line-height:20px;font-size:11.5px;font-family:'Liberation Serif',serif;color:#808080">Z</div></div>
<div class="t" style="left:1465px;top:207px;height:20px;line-height:20px;font-size:12px;color:#d0d0d0;">Scale</div>
<div style="left:1634px;top:207px;width:91px;height:20px;background:#141414;border-radius:2px;"><div class="t" style="left:5.5px;top:0px;height:20px;line-height:20px;font-size:12px;color:#e0e0e0;">1</div><div class="t" style="right:3px;top:-0.3px;height:20px;line-height:20px;font-size:11.5px;font-family:'Liberation Serif',serif;color:#808080">X</div></div>
<div style="left:1729px;top:207px;width:91px;height:20px;background:#141414;border-radius:2px;"><div class="t" style="left:5.5px;top:0px;height:20px;line-height:20px;font-size:12px;color:#e0e0e0;">1</div><div class="t" style="right:3px;top:-0.3px;height:20px;line-height:20px;font-size:11.5px;font-family:'Liberation Serif',serif;color:#808080">Y</div></div>
<div style="left:1824px;top:207px;width:91px;height:20px;background:#141414;border-radius:2px;"><div class="t" style="left:5.5px;top:0px;height:20px;line-height:20px;font-size:12px;color:#e0e0e0;">1</div><div class="t" style="right:3px;top:-0.3px;height:20px;line-height:20px;font-size:11.5px;font-family:'Liberation Serif',serif;color:#808080">Z</div></div>
<div class="t" style="left:1465px;top:231px;height:20px;line-height:20px;font-size:12px;color:#d0d0d0;">Mobility</div>
<div style="left:1634px;top:231px;width:281px;height:20px;background:#3f3f3f;border-radius:2px;"><div class="t" style="left:7.3px;top:0px;height:20px;line-height:20px;font-size:12px;color:#e0e0e0;">Static</div></div>
<div style="left:1898px;top:238.3px;line-height:0"><svg width="9" height="5.5" viewBox="0 0 9 5.5"><path d="M0.6 0.6 L4.5 4.9 L8.4 0.6" fill="none" stroke="#e0e0e0" stroke-width="1.5" stroke-linecap="round" stroke-linejoin="round"/></svg></div>
<div class="t" style="left:1465px;top:255px;height:20px;line-height:20px;font-size:12px;color:#d0d0d0;">Layer</div>
<div style="left:1634px;top:255px;width:242px;height:20px;background:#3f3f3f;border-radius:2px;"><div class="t" style="left:7.3px;top:0px;height:20px;line-height:20px;font-size:12px;color:#e0e0e0;">UI_2D</div></div>
<div style="left:1859px;top:262.3px;line-height:0"><svg width="9" height="5.5" viewBox="0 0 9 5.5"><path d="M0.6 0.6 L4.5 4.9 L8.4 0.6" fill="none" stroke="#e0e0e0" stroke-width="1.5" stroke-linecap="round" stroke-linejoin="round"/></svg></div>
<div style="left:1880px;top:255px;width:35px;height:20px;background:#3f3f3f;border-radius:2px;text-align:center;"><div class="t" style="left:0px;top:0px;height:20px;line-height:20px;font-size:12px;color:#e0e0e0;width:35px;overflow:hidden;text-align:center;">Edit</div></div>
<div style="left:1441px;top:283px;width:478px;height:1px;background:#060606;"></div>
<div style="left:1441px;top:284px;width:478px;height:24px;background:#3f3f3f;"></div>
<div style="left:1447px;top:293.8px;line-height:0"><svg width="8.4" height="5.2" viewBox="0 0 8.4 5.2"><path d="M0.6 0.6 L4.2 4.6000000000000005 L7.800000000000001 0.6" fill="none" stroke="#b4b4b4" stroke-width="1.4" stroke-linecap="round" stroke-linejoin="round"/></svg></div>
<div style="left:1464px;top:289px;width:14px;height:14px"><div style="left:0;top:0;width:14px;height:14px;background:#141414;border:1px solid #484848;border-radius:2px;"><div style="left:1px;top:2px;line-height:0"><svg width="10" height="8" viewBox="0 0 10 8"><path d="M1 4.2 L3.8 6.8 L9 1.2" fill="none" stroke="#d2d2d2" stroke-width="2.1" stroke-linecap="butt" stroke-linejoin="miter"/></svg></div></div></div>
<div style="left:1486.7px;top:290px;line-height:0"><svg width="12" height="12" viewBox="0 0 12 12"><rect x="1.5" y="1.5" width="9" height="9" fill="none" stroke="#c8c53c" stroke-width="1"/><rect x="0" y="0" width="3" height="3" fill="#c8c53c"/><rect x="9" y="0" width="3" height="3" fill="#c8c53c"/><rect x="0" y="9" width="3" height="3" fill="#c8c53c"/><rect x="9" y="9" width="3" height="3" fill="#c8c53c"/></svg></div>
<div class="t" style="left:1504.5px;top:286px;height:20px;line-height:20px;font-size:12px;color:#e0e0e0;font-weight:bold;">cc.UITransform</div>
<div style="left:1880px;top:289px;line-height:0"><svg width="14" height="14" viewBox="0 0 14 14"><circle cx="7" cy="7" r="6.2" fill="none" stroke="#c4c4c4" stroke-width="1.1"/><text x="7" y="10.3" font-family="Liberation Sans" font-size="9" fill="#c4c4c4" text-anchor="middle">?</text></svg></div>
<div style="left:1905.5px;top:289.5px;line-height:0"><svg width="3" height="13" viewBox="0 0 3 13"><circle cx="1.5" cy="1.6" r="1.4" fill="#c0c0c0"/><circle cx="1.5" cy="6.5" r="1.4" fill="#c0c0c0"/><circle cx="1.5" cy="11.4" r="1.4" fill="#c0c0c0"/></svg></div>
<div class="t" style="left:1465px;top:312px;height:20px;line-height:20px;font-size:12px;color:#d0d0d0;">Content Size</div>
<div style="left:1634px;top:312px;width:139px;height:20px;background:#141414;border-radius:2px;"><div class="t" style="left:5.5px;top:0px;height:20px;line-height:20px;font-size:12px;color:#e0e0e0;">158</div><div class="t" style="right:3px;top:-0.3px;height:20px;line-height:20px;font-size:11.5px;font-family:'Liberation Serif',serif;color:#808080">W</div></div>
<div style="left:1777px;top:312px;width:138px;height:20px;background:#141414;border-radius:2px;"><div class="t" style="left:5.5px;top:0px;height:20px;line-height:20px;font-size:12px;color:#e0e0e0;">40</div><div class="t" style="right:3px;top:-0.3px;height:20px;line-height:20px;font-size:11.5px;font-family:'Liberation Serif',serif;color:#808080">H</div></div>
<div class="t" style="left:1465px;top:336px;height:20px;line-height:20px;font-size:12px;color:#d0d0d0;">Anchor Point</div>
<div style="left:1634px;top:336px;width:139px;height:20px;background:#141414;border-radius:2px;"><div class="t" style="left:5.5px;top:0px;height:20px;line-height:20px;font-size:12px;color:#e0e0e0;">0.5</div><div class="t" style="right:3px;top:-0.3px;height:20px;line-height:20px;font-size:11.5px;font-family:'Liberation Serif',serif;color:#808080">X</div></div>
<div style="left:1777px;top:336px;width:138px;height:20px;background:#141414;border-radius:2px;"><div class="t" style="left:5.5px;top:0px;height:20px;line-height:20px;font-size:12px;color:#e0e0e0;">0.5</div><div class="t" style="right:3px;top:-0.3px;height:20px;line-height:20px;font-size:11.5px;font-family:'Liberation Serif',serif;color:#808080">Y</div></div>
<div style="left:1441px;top:364px;width:478px;height:1px;background:#060606;"></div>
<div style="left:1441px;top:365px;width:478px;height:24px;background:#3f3f3f;"></div>
<div style="left:1447px;top:374.8px;line-height:0"><svg width="8.4" height="5.2" viewBox="0 0 8.4 5.2"><path d="M0.6 0.6 L4.2 4.6000000000000005 L7.800000000000001 0.6" fill="none" stroke="#b4b4b4" stroke-width="1.4" stroke-linecap="round" stroke-linejoin="round"/></svg></div>
<div style="left:1464px;top:370px;width:14px;height:14px"><div style="left:0;top:0;width:14px;height:14px;background:#141414;border:1px solid #484848;border-radius:2px;"><div style="left:1px;top:2px;line-height:0"><svg width="10" height="8" viewBox="0 0 10 8"><path d="M1 4.2 L3.8 6.8 L9 1.2" fill="none" stroke="#d2d2d2" stroke-width="2.1" stroke-linecap="butt" stroke-linejoin="miter"/></svg></div></div></div>
<div style="left:1486.7px;top:371px;line-height:0"><svg width="12" height="12" viewBox="0 0 12 12"><rect x="0.5" y="0.5" width="11" height="11" fill="none" stroke="#d982d4" stroke-width="1"/><path fill="#d982d4" d="M2.6 2.6 H9.4 V4.4 H7 V9.6 H5 V4.4 H2.6 Z"/></svg></div>
<div class="t" style="left:1504.5px;top:367px;height:20px;line-height:20px;font-size:12px;color:#e0e0e0;font-weight:bold;">cc.Label</div>
<div style="left:1880px;top:370px;line-height:0"><svg width="14" height="14" viewBox="0 0 14 14"><circle cx="7" cy="7" r="6.2" fill="none" stroke="#c4c4c4" stroke-width="1.1"/><text x="7" y="10.3" font-family="Liberation Sans" font-size="9" fill="#c4c4c4" text-anchor="middle">?</text></svg></div>
<div style="left:1905.5px;top:370.5px;line-height:0"><svg width="3" height="13" viewBox="0 0 3 13"><circle cx="1.5" cy="1.6" r="1.4" fill="#c0c0c0"/><circle cx="1.5" cy="6.5" r="1.4" fill="#c0c0c0"/><circle cx="1.5" cy="11.4" r="1.4" fill="#c0c0c0"/></svg></div>
<div style="left:1465px;top:396.7px;height:12px;line-height:0"><svg class="cj" width="60.00" height="12.00" viewBox="0 0 60 12" style=""><text x="0" y="10.56" fill="#d0d0d0" stroke="#d0d0d0">自定义材质</text></svg></div>
<div style="left:1634px;top:393px;width:281px;height:20px;background:#141414;border-radius:3px;border-left:3px solid #2787ab;"><div class="t" style="left:4.5px;top:0px;height:20px;line-height:20px;font-size:12px;color:#7a7a7a;">cc.Material</div></div>
<div style="left:1900.5px;top:398px;line-height:0"><svg width="11" height="11" viewBox="0 0 11 11"><path fill="#c8c8c8" d="M2.2 0 H8.8 L11 5.4 V10 Q11 11 10 11 H1 Q0 11 0 10 V5.4 Z"/><path fill="#141414" d="M2.9 1.2 H8.1 L9.6 5.4 H7.4 L6.6 6.8 H4.4 L3.6 5.4 H1.4 Z"/></svg></div>
<div style="left:1465px;top:420.7px;height:12px;line-height:0"><svg class="cj" width="24.00" height="12.00" viewBox="0 0 24 12" style=""><text x="0" y="10.56" fill="#d0d0d0" stroke="#d0d0d0">颜色</text></svg></div>
<div style="left:1634px;top:417px;width:197px;height:17px;background:#bbbbbb;border-radius:2px 2px 0 0;"></div>
<div style="left:1634px;top:435px;width:197px;height:2px;background:#ffffff;"></div>
<div style="left:1835px;top:417px;width:80px;height:20px;background:#141414;border-radius:2px;"><div class="t" style="left:5.5px;top:0px;height:20px;line-height:20px;font-size:12px;color:#e0e0e0;"></div></div>
<div class="t" style="left:1842px;top:417px;height:20px;line-height:20px;font-size:12px;color:#e0e0e0;">BBBBBB</div>
<div style="left:1465px;top:444.7px;height:12px;line-height:0"><svg class="cj" width="36.00" height="12.00" viewBox="0 0 36 12" style=""><text x="0" y="10.56" fill="#d0d0d0" stroke="#d0d0d0">字符串</text></svg></div>
<div style="left:1634px;top:441px;width:281px;height:43px;background:#141414;border-radius:2px;border:1px solid #0c0c0c;"><div class="t" style="left:6px;top:2px;height:20px;line-height:20px;font-size:12px;color:#e0e0e0;">Enter text here...</div></div>
<div style="left:1905px;top:474px;line-height:0"><svg width="9" height="9" viewBox="0 0 9 9"><path d="M8.5 1 L1 8.5 M8.5 5 L5 8.5" stroke="#8a8a8a" stroke-width="1"/></svg></div>
<div style="left:1465px;top:491.4px;height:12px;line-height:0"><svg class="cj" width="48.00" height="12.00" viewBox="0 0 48 12" style=""><text x="0" y="10.56" fill="#d0d0d0" stroke="#d0d0d0">水平对齐</text></svg></div>
<div style="left:1635px;top:489px;width:279px;height:20px;border:1px solid #464646;border-radius:2px;"></div>
<div style="left:1727px;top:489px;width:94px;height:20px;background:#0b4a5e;border:1px solid #2584a6;"></div>
<div style="left:1676.0px;top:493.0px;line-height:0"><svg width="12" height="12" viewBox="0 0 12 12"><rect x="0" y="0" width="1.2" height="12" fill="#c4c4c4"/><rect x="3" y="2.4" width="4.4" height="2.6" fill="#c4c4c4"/><rect x="3.5" y="7.5" width="7.8" height="2" fill="none" stroke="#c4c4c4" stroke-width="1"/></svg></div>
<div style="left:1768.5px;top:493.0px;line-height:0"><svg width="11" height="12" viewBox="0 0 11 12"><rect x="4.9" y="0" width="1.2" height="12" fill="#e4e4e4" opacity="0.75"/><rect x="3" y="2.4" width="5" height="2.6" fill="#e4e4e4"/><rect x="1" y="7.5" width="9" height="2" fill="#0b4a5e" stroke="#e4e4e4" stroke-width="1"/></svg></div>
<div style="left:1861.0px;top:493.0px;line-height:0"><svg width="12" height="12" viewBox="0 0 12 12"><rect x="10.8" y="0" width="1.2" height="12" fill="#c4c4c4"/><rect x="4.6" y="2.4" width="4.4" height="2.6" fill="#c4c4c4"/><rect x="0.7" y="7.5" width="7.8" height="2" fill="none" stroke="#c4c4c4" stroke-width="1"/></svg></div>
<div style="left:1465px;top:517.4px;height:12px;line-height:0"><svg class="cj" width="48.00" height="12.00" viewBox="0 0 48 12" style=""><text x="0" y="10.56" fill="#d0d0d0" stroke="#d0d0d0">竖直对齐</text></svg></div>
<div style="left:1635px;top:515px;width:279px;height:20px;border:1px solid #464646;border-radius:2px;"></div>
<div style="left:1727px;top:515px;width:94px;height:20px;background:#0b4a5e;border:1px solid #2584a6;"></div>
<div style="left:1675.0px;top:519.0px;line-height:0"><svg width="12" height="12" viewBox="0 0 12 12"><rect x="0" y="0" width="12" height="1.2" fill="#c4c4c4"/><rect x="7" y="3" width="2.6" height="4.4" fill="#c4c4c4"/><rect x="2.5" y="3.5" width="2" height="7.8" fill="none" stroke="#c4c4c4" stroke-width="1"/></svg></div>
<div style="left:1768.0px;top:519.5px;line-height:0"><svg width="12" height="11" viewBox="0 0 12 11"><rect x="0" y="4.9" width="12" height="1.2" fill="#e4e4e4" opacity="0.75"/><rect x="7" y="3" width="2.6" height="5" fill="#e4e4e4"/><rect x="2.5" y="1" width="2" height="9" fill="#0b4a5e" stroke="#e4e4e4" stroke-width="1"/></svg></div>
<div style="left:1861.0px;top:519.0px;line-height:0"><svg width="12" height="12" viewBox="0 0 12 12"><rect x="0" y="10.8" width="12" height="1.2" fill="#c4c4c4"/><rect x="7" y="4.6" width="2.6" height="4.4" fill="#c4c4c4"/><rect x="2.5" y="0.7" width="2" height="7.8" fill="none" stroke="#c4c4c4" stroke-width="1"/></svg></div>
<div style="left:1465px;top:543.7px;height:12px;line-height:0"><svg class="cj" width="48.00" height="12.00" viewBox="0 0 48 12" style=""><text x="0" y="10.56" fill="#d0d0d0" stroke="#d0d0d0">字体大小</text></svg></div>
<div style="left:1634px;top:540px;width:281px;height:20px;background:#141414;border-radius:2px;"><div class="t" style="left:5.5px;top:0px;height:20px;line-height:20px;font-size:12px;color:#e0e0e0;">20</div></div>
<div style="left:1465px;top:567.7px;height:12px;line-height:0"><svg class="cj" width="24.00" height="12.00" viewBox="0 0 24 12" style=""><text x="0" y="10.56" fill="#d0d0d0" stroke="#d0d0d0">行高</text></svg></div>
<div style="left:1634px;top:564px;width:281px;height:20px;background:#141414;border-radius:2px;"><div class="t" style="left:5.5px;top:0px;height:20px;line-height:20px;font-size:12px;color:#e0e0e0;">40</div></div>
<div style="left:1465px;top:591.7px;height:12px;line-height:0"><svg class="cj" width="48.00" height="12.00" viewBox="0 0 48 12" style=""><text x="0" y="10.56" fill="#d0d0d0" stroke="#d0d0d0">溢出处理</text></svg></div>
<div style="left:1634px;top:588px;width:281px;height:20px;background:#3f3f3f;border-radius:2px;"><div class="t" style="left:7.3px;top:0px;height:20px;line-height:20px;font-size:12px;color:#e0e0e0;">CLAMP</div></div>
<div style="left:1898px;top:595.3px;line-height:0"><svg width="9" height="5.5" viewBox="0 0 9 5.5"><path d="M0.6 0.6 L4.5 4.9 L8.4 0.6" fill="none" stroke="#e0e0e0" stroke-width="1.5" stroke-linecap="round" stroke-linejoin="round"/></svg></div>
<div style="left:1465px;top:615.7px;height:12px;line-height:0"><svg class="cj" width="48.00" height="12.00" viewBox="0 0 48 12" style=""><text x="0" y="10.56" fill="#d0d0d0" stroke="#d0d0d0">自动换行</text></svg></div>
<div style="left:1637px;top:615px;width:14px;height:14px"><div style="left:0;top:0;width:14px;height:14px;background:#141414;border:1px solid #484848;border-radius:2px;"></div></div>
<div style="left:1465px;top:639.7px;height:12px;line-height:0"><svg class="cj" width="48.00" height="12.00" viewBox="0 0 48 12" style=""><text x="0" y="10.56" fill="#d0d0d0" stroke="#d0d0d0">系统字体</text></svg></div>
<div style="left:1637px;top:639px;width:14px;height:14px"><div style="left:0;top:0;width:14px;height:14px;background:#141414;border:1px solid #484848;border-radius:2px;"><div style="left:1px;top:2px;line-height:0"><svg width="10" height="8" viewBox="0 0 10 8"><path d="M1 4.2 L3.8 6.8 L9 1.2" fill="none" stroke="#d2d2d2" stroke-width="2.1" stroke-linecap="butt" stroke-linejoin="miter"/></svg></div></div></div>
<div style="left:1465px;top:663.7px;height:12px;line-height:0"><svg class="cj" width="36.00" height="12.00" viewBox="0 0 36 12" style=""><text x="0" y="10.56" fill="#d0d0d0" stroke="#d0d0d0">字体族</text></svg></div>
<div style="left:1634px;top:660px;width:281px;height:20px;background:#141414;border-radius:2px;"><div class="t" style="left:5.5px;top:0px;height:20px;line-height:20px;font-size:12px;color:#e0e0e0;"></div></div>
<div class="t" style="left:1641.6px;top:660px;height:20px;line-height:20px;font-size:12px;color:#e0e0e0;">Arial</div>
<div style="left:1465px;top:687.7px;height:12px;line-height:0"><svg class="cj" width="48.00" height="12.00" viewBox="0 0 48 12" style=""><text x="0" y="10.56" fill="#d0d0d0" stroke="#d0d0d0">缓存模式</text></svg></div>
<div style="left:1634px;top:684px;width:281px;height:20px;background:#3f3f3f;border-radius:2px;"><div class="t" style="left:7.3px;top:0px;height:20px;line-height:20px;font-size:12px;color:#e0e0e0;">NONE</div></div>
<div style="left:1898px;top:691.3px;line-height:0"><svg width="9" height="5.5" viewBox="0 0 9 5.5"><path d="M0.6 0.6 L4.5 4.9 L8.4 0.6" fill="none" stroke="#e0e0e0" stroke-width="1.5" stroke-linecap="round" stroke-linejoin="round"/></svg></div>
<div style="left:1465px;top:711.7px;height:12px;line-height:0"><svg class="cj" width="48.00" height="12.00" viewBox="0 0 48 12" style=""><text x="0" y="10.56" fill="#d0d0d0" stroke="#d0d0d0">文本样式</text></svg></div>
<div style="left:1634px;top:708px;width:44px;height:22px;border:1px solid #4a4a4a;border-radius:2px;"><div class="t" style="left:0px;top:0px;height:20px;line-height:20px;font-size:12px;color:#e0e0e0;width:42px;overflow:hidden;text-align:center;font-weight:bold;">B</div></div>
<div style="left:1683px;top:708px;width:44px;height:22px;border:1px solid #4a4a4a;border-radius:2px;"><div class="t" style="left:0px;top:0px;height:20px;line-height:20px;font-size:12px;color:#e0e0e0;width:42px;overflow:hidden;text-align:center;font-style:italic;">I</div></div>
<div style="left:1732px;top:708px;width:44px;height:22px;border:1px solid #4a4a4a;border-radius:2px;"><div class="t" style="left:0px;top:0px;height:20px;line-height:20px;font-size:12px;color:#e0e0e0;width:42px;overflow:hidden;text-align:center;">U</div></div>
<div style="left:1465px;top:737.7px;height:12px;line-height:0"><svg class="cj" width="48.00" height="12.00" viewBox="0 0 48 12" style=""><text x="0" y="10.56" fill="#d0d0d0" stroke="#d0d0d0">启用描边</text></svg></div>
<div style="left:1637px;top:737px;width:14px;height:14px"><div style="left:0;top:0;width:14px;height:14px;background:#141414;border:1px solid #484848;border-radius:2px;"></div></div>
<div style="left:1465px;top:761.7px;height:12px;line-height:0"><svg class="cj" width="48.00" height="12.00" viewBox="0 0 48 12" style=""><text x="0" y="10.56" fill="#d0d0d0" stroke="#d0d0d0">启用阴影</text></svg></div>
<div style="left:1637px;top:761px;width:14px;height:14px"><div style="left:0;top:0;width:14px;height:14px;background:#141414;border:1px solid #484848;border-radius:2px;"></div></div>
<div style="left:1440px;top:88px;line-height:0"><svg width="204" height="80" viewBox="0 0 204 80"><rect x="5.2" y="4.8" width="192.9" height="69" rx="4" fill="none" stroke="#ff2416" stroke-width="3.4"/></svg></div>
<div style="left:1919px;top:49px;width:1px;height:736px;background:#060606;"></div>
</body></html>
